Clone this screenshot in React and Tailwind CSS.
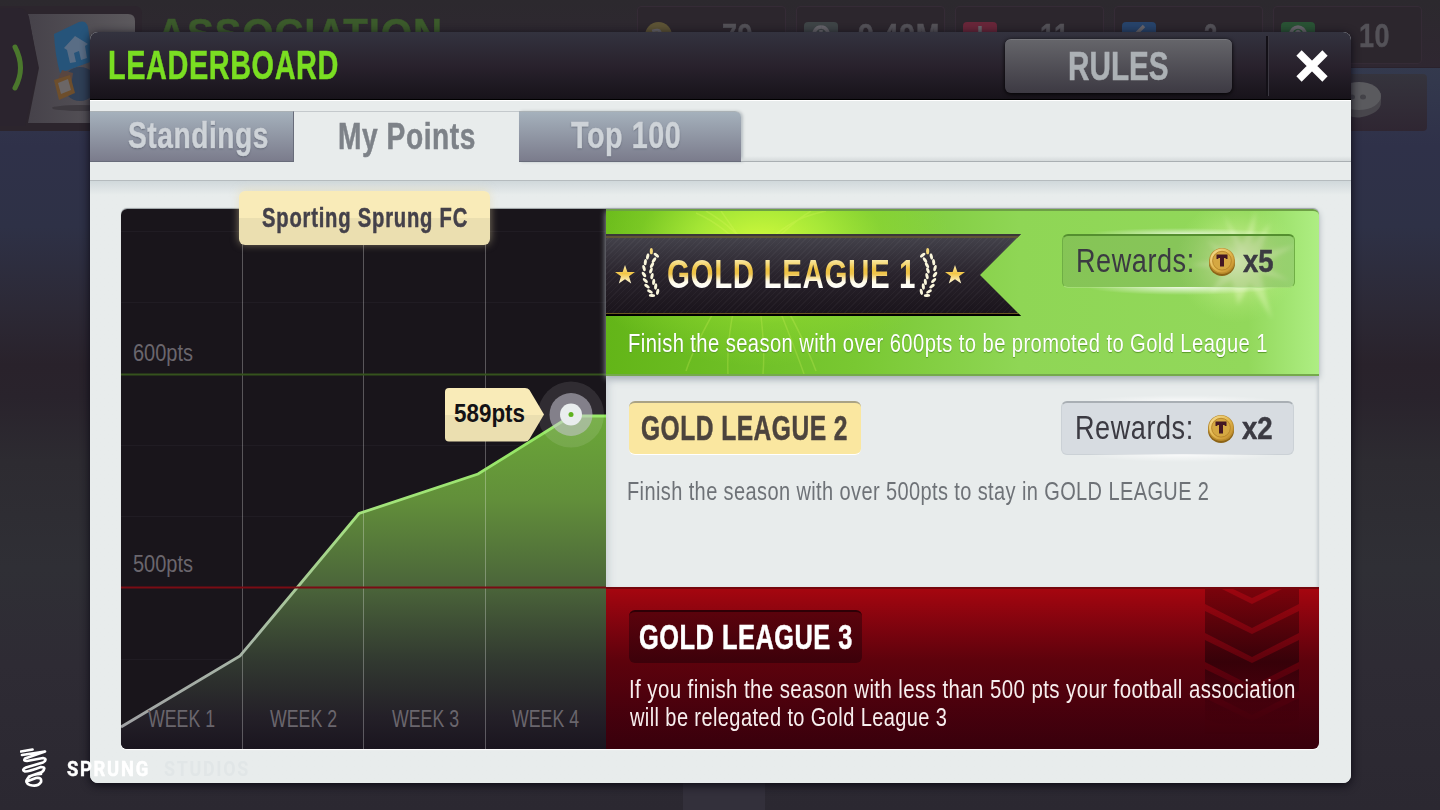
import { useLayoutEffect, useRef, useState } from "react";

const FONT = "font-['Liberation_Sans_Narrow','Liberation_Sans',sans-serif]";

// Condensed text: squeezes a single line to the width of its box
function FitText({ children, bold, className = "", textClass = "tracking-[0.02em]" }) {
  const box = useRef(null);
  const text = useRef(null);
  const [scale, setScale] = useState(1);

  useLayoutEffect(() => {
    setScale(box.current.clientWidth / text.current.offsetWidth);
  }, [children]);

  return (
    <div
      ref={box}
      className={`shrink-0 whitespace-nowrap leading-none ${bold ? "font-bold [-webkit-text-stroke:0.5px]" : ""} ${className}`}
    >
      <span
        ref={text}
        className={`inline-block origin-left align-top ${textClass}`}
        style={{ transform: `scaleX(${scale})` }}
      >
        {children}
      </span>
    </div>
  );
}

function Star({ className = "" }) {
  return (
    <svg viewBox="0 0 20 19" className={`h-[19px] w-5 shrink-0 ${className}`}>
      <defs>
        <linearGradient id="star" x1="0" y1="0" x2="0" y2="1">
          <stop offset="0" stopColor="#fff3b8" />
          <stop offset="0.45" stopColor="#f2c544" />
          <stop offset="1" stopColor="#fffbe0" />
        </linearGradient>
      </defs>
      <path d="M10 0l2.400 7H20l-6 4.300 2.200 7.200L10 14.200 3.800 18.500 6 11.300 0 7h7.600z" fill="url(#star)" />
    </svg>
  );
}

const leaves = [
  [31, 12, 0], [20, 28, 12], [46, 24, -50], [13, 45, 5], [39, 39, 35],
  [9, 63, -15], [33, 54, 30], [9, 82, -35], [30, 70, 20], [13, 100, -45],
  [33, 87, 12], [18, 117, -52], [38, 104, 5], [27, 133, -62], [44, 118, 5],
  [50, 134, 10], [33, 145, -85],
];

function Laurel({ className = "" }) {
  return (
    <svg viewBox="0 0 60 152" className={`h-[51px] w-5 shrink-0 ${className}`}>
      {leaves.map(([x, y, r]) => (
        <ellipse
          key={`${x}-${y}`}
          cx={x}
          cy={y}
          rx="4.600"
          ry="9.500"
          fill={y < 20 ? "#f3d778" : "#faf6dc"}
          transform={`rotate(${r} ${x} ${y})`}
        />
      ))}
    </svg>
  );
}

function Coin() {
  return (
    <svg viewBox="0 0 28 30" className="h-[30px] w-7 shrink-0">
      <defs>
        <linearGradient id="coin" x1="0" y1="0" x2="1" y2="1">
          <stop offset="0" stopColor="#f8e19a" />
          <stop offset="0.500" stopColor="#e3b84f" />
          <stop offset="1" stopColor="#bf8826" />
        </linearGradient>
      </defs>
      <ellipse cx="14" cy="16.500" rx="13" ry="12.500" fill="#8d6416" />
      <circle cx="14" cy="14" r="13" fill="#b98a2c" />
      <circle cx="14" cy="13.500" r="12" fill="url(#coin)" />
      <circle cx="14" cy="13.700" r="9.400" fill="#d5a842" stroke="#b58328" strokeWidth="0.900" />
      <path d="M8.500 7.500h11v4.500h-1.600l-.5-1H16v8.500h-4V11h-1.400l-.5 1H8.500z" fill="#431723" />
    </svg>
  );
}

function Rewards({ amount, className = "" }) {
  return (
    <div className={`relative flex h-[54px] w-[233px] items-center rounded-md pl-[13px] text-[#3b3a42] ${className}`}>
      <div className="absolute -top-2 left-6 h-1.5 w-48 bg-[radial-gradient(ellipse_50%_100%_at_50%_100%,#ffffffaa,transparent)]" />
      <div className="absolute -bottom-2 left-6 h-2 w-48 bg-[radial-gradient(ellipse_50%_100%_at_50%_0%,#ffffffcc,transparent)]" />
      <FitText className="-mt-0.5 w-[119px] text-[33px]">Rewards:</FitText>
      <div className="ml-[13px]">
        <Coin />
      </div>
      <FitText bold className="-mt-0.5 ml-[7px] w-[31px] text-[32px]" textClass="tracking-normal">{amount}</FitText>
    </div>
  );
}

const stats = [
  { value: "79", icon: "size-[27px] rounded-full bg-[#5d5335]", box: "pr-[32px]", width: "w-[31px]" },
  { value: "9.49M", icon: "h-[27px] w-[34px] rounded-sm bg-[#3e4446]", box: "pr-[4px]", width: "w-[82px]" },
  { value: "11", icon: "h-[27px] w-[34px] rounded-sm bg-[#682639]", box: "pr-[34px]", width: "w-[29px]" },
  { value: "2", icon: "h-[27px] w-[34px] rounded-sm bg-[#27436a]", box: "pr-[44px]", width: "w-[14px]" },
  { value: "10", icon: "h-[27px] w-[34px] rounded-sm bg-[#295234]", box: "pr-[31px]", width: "w-[31px]" },
];

const statMarks = [
  "M9 8q9-3 10 1l-6 4",
  "M17 5a7 7 0 1 0 .1 0M17 8v9",
  "M17 4v18M9 13h16",
  "M22 4l-9 9h7l-7 9",
  "M10 12a7 7 0 0 1 14 0M15 12q2-5 4 0",
];

function Backdrop() {
  return (
    <div className="absolute inset-0">
      <div className="h-full bg-[linear-gradient(to_bottom,#343a4e_8%,#2f3149_18%,#2e3146_28%,#2c2936_38%,#29222b_45%,#29232c_49%,#2d2b31_57%,#2f2f35_70%,#2e2b34_82%,#2b2831_100%)]">
        <div className="flex h-[68px] items-start border-b border-[#2a222c] bg-linear-to-b from-[#2c292e] to-[#2f2731] pl-[157px]">
          <FitText bold className="mt-[13px] w-[286px] text-[42px] text-[#3b5a2b]">ASSOCIATION</FitText>
          <div className="ml-[194px] mt-1.5 flex gap-[10px]">
            {stats.map((stat, i) => (
              <div key={stat.value} className={`flex h-[58px] w-[149px] justify-between rounded border border-[#352b36] bg-[#2c262d] pl-[7px] ${stat.box}`}>
                <svg viewBox="0 0 34 27" className={`mt-[15px] shrink-0 ${stat.icon}`}>
                  <path d={statMarks[i]} stroke="#66646a" strokeWidth="3.500" fill="none" />
                </svg>
                <FitText bold className={`mt-[11px] text-[34px] text-[#545258] ${stat.width}`}>{stat.value}</FitText>
              </div>
            ))}
          </div>
        </div>
      </div>

      <svg viewBox="0 0 150 135" className="absolute left-0 top-0 h-[135px] w-[150px]">
        <defs>
          <linearGradient id="crest" x1="0" x2="1">
            <stop offset="0" stopColor="#46424a" />
            <stop offset="1" stopColor="#5c595d" />
          </linearGradient>
        </defs>
        <path d="M0 6h134q8 0 8 8v117H0z" fill="#2c252d" />
        <path d="M28 14h100q7 0 7 7v102H28L39 68z" fill="url(#crest)" />
        <path d="M0 8h18q8 0 11 9l9 51-13 58H0z" fill="#2b242e" />
        <path d="M15 47q11 21 0 41" stroke="#4b782d" strokeWidth="5" fill="none" strokeLinecap="round" />
        <ellipse cx="80" cy="108" rx="28" ry="3" fill="#3e3a40" />
        <circle cx="80" cy="84" r="17" fill="#2f3f56" />
        <path d="M54 34l25-12q7-2 9 5l5 34-33 12q-5-18-6-39z" fill="#26547a" />
        <path d="M64 48l11-12 13 8-3 2 2 12-6 2-2-9-5 2 2 9-6 1-3-13z" fill="#596d85" />
        <path d="M62 70l11 3-2 13-14-4z" fill="#594640" />
        <path d="M54 80l16-5 5 18-16 7z" fill="#6d4e2c" />
        <path d="M58 83l10-4 3 11-10 4z" fill="#6b6666" />
      </svg>

      <div className="absolute left-[1340px] top-[74px] h-[57px] w-[87px] rounded bg-linear-to-b from-[#35343d] to-[#2f2632]">
        <svg viewBox="0 0 41 38" className="mt-2 h-[38px] w-[41px]">
          <path d="M0 16v8q8 14 22 11 19-4 19-15v-9z" fill="#48464c" />
          <ellipse cx="19" cy="14" rx="22" ry="14" fill="#5a5a5e" />
          <ellipse cx="23" cy="15" rx="3" ry="2.500" fill="#434248" />
          <ellipse cx="12" cy="15" rx="3" ry="2.500" fill="#434248" />
        </svg>
      </div>

      <div className="absolute bottom-0 left-[683px] h-[27px] w-[82px] bg-[#33303b]" />
    </div>
  );
}

function Header() {
  return (
    <div className="flex h-[68px] shrink-0 items-center rounded-t-lg border-b border-black bg-linear-to-b from-[#33333f] via-[#29222d] to-[#17131a] pl-[18px]">
      <FitText bold className="w-[231px] text-[41px] text-[#7ade22]">LEADERBOARD</FitText>
      <button className="ml-auto flex h-[54px] w-[227px] items-center justify-center rounded-md border-t border-[#77777c] bg-linear-to-b from-[#65656a] to-[#3d3a43] text-[#acb1b5] shadow-[0_1px_4px_#000]">
        <FitText bold className="w-[101px] text-[40px]" textClass="tracking-normal">RULES</FitText>
      </button>
      <div className="ml-[34px] h-[60px] w-[3px] border-l-2 border-r border-l-[#131017] border-r-[#3b3841]" />
      <button className="flex h-full w-[82px] items-center pl-[27px]">
        <svg viewBox="0 0 32 32" className="size-8">
          <path d="M3 3l26 26M29 3L3 29" stroke="#fff" strokeWidth="7.500" />
        </svg>
      </button>
    </div>
  );
}

function Tabs() {
  return (
    <div className="h-[81px] shrink-0 border-b border-[#b5bbbe] border-t border-t-white">
      <div className="flex h-[61px] items-end">
        <button className="flex h-[51px] w-[204px] items-center border-r border-[#686c7a] border-b border-t border-t-[#aab1b5] bg-linear-to-b from-[#a5b1bc] to-[#7b7c8c] pl-[38px]">
          <FitText bold className="w-[141px] text-[36.500px] text-[#ced3d8]" textClass="tracking-[0.02em] [text-shadow:0_1px_2px_#5d6270]">Standings</FitText>
        </button>
        <button className="flex h-[51px] w-[225px] items-center justify-center border-t border-[#c4c9cc]">
          <FitText bold className="w-[138px] text-[36.500px] text-[#7d8288]">My Points</FitText>
        </button>
        <button className="flex h-[51px] w-[222px] items-center rounded-tr-md border-b border-t border-b-[#686c7a] border-t-[#aab1b5] bg-linear-to-b from-[#a5b1bc] to-[#7b7c8c] pl-[52px] shadow-[2px_0_3px_#b9c0c4]">
          <FitText bold className="w-[110px] text-[36.500px] text-[#ced3d8]" textClass="tracking-[0.02em] [text-shadow:0_1px_2px_#5d6270]">Top 100</FitText>
        </button>
        <div className="h-1.5 flex-1 border-b border-[#a9afb2] bg-linear-to-b from-transparent to-[#d5dadb]" />
      </div>
    </div>
  );
}

const weeks = [
  { label: "WEEK 1", x: 27, w: 67 },
  { label: "WEEK 2", x: 149, w: 67 },
  { label: "WEEK 3", x: 271, w: 67 },
  { label: "WEEK 4", x: 391, w: 67 },
];

function Chart() {
  return (
    <svg viewBox="0 0 485 540" className={`h-[540px] w-[485px] shrink-0 rounded-l-md bg-[#19151b] ${FONT}`}>
      <defs>
        <linearGradient id="area" gradientUnits="userSpaceOnUse" x1="0" y1="207" x2="0" y2="540">
          <stop offset="0" stopColor="#6ba838" />
          <stop offset="0.250" stopColor="#628f3a" />
          <stop offset="0.510" stopColor="#4b653a" />
          <stop offset="0.740" stopColor="#313830" />
          <stop offset="0.900" stopColor="#242028" />
          <stop offset="1" stopColor="#1a151f" />
        </linearGradient>
        <linearGradient id="line" gradientUnits="userSpaceOnUse" x1="0" y1="207" x2="0" y2="518">
          <stop offset="0" stopColor="#8fe85a" />
          <stop offset="0.300" stopColor="#a3e37c" />
          <stop offset="0.700" stopColor="#a9bba6" />
          <stop offset="1" stopColor="#a0a1a4" />
        </linearGradient>
        <linearGradient id="tag" x1="0" y1="0" x2="0" y2="1">
          <stop offset="0.500" stopColor="#f9ebb8" />
          <stop offset="0.500" stopColor="#ebdfb0" />
        </linearGradient>
      </defs>

      {[22, 93, 236, 307, 450, 521].map((y) => (
        <path key={y} d={`M0 ${y}.500h485`} stroke="#201c23" />
      ))}
      <path d="M0 518L119 447 238 304.500 357 265 450 207H485V540H0z" fill="url(#area)" />
      <path d="M121.500 0v540M242.500 0v540M364.500 0v540" stroke="#fff" strokeOpacity="0.280" />
      <path d="M0 518L119 447 238 304.500 357 265 450 207H485" stroke="url(#line)" strokeWidth="2.800" fill="none" />
      <path d="M0 165.500h485" stroke="#35521d" strokeWidth="2" />
      <path d="M0 378.500h485" stroke="#7a0c14" strokeWidth="2" />

      <g fill="#6a666d" fontSize="24">
        <text x="12" y="152" textLength="60" lengthAdjust="spacingAndGlyphs">600pts</text>
        <text x="12" y="363" textLength="60" lengthAdjust="spacingAndGlyphs">500pts</text>
        {weeks.map((week) => (
          <text key={week.label} x={week.x} y="518" textLength={week.w} lengthAdjust="spacingAndGlyphs">
            {week.label}
          </text>
        ))}
      </g>

      <circle cx="450" cy="205.500" r="33" fill="#fff" fillOpacity="0.100" />
      <circle cx="450" cy="205.500" r="21.500" fill="#c9c6d4" fillOpacity="0.550" />
      <circle cx="450" cy="205.500" r="11" fill="#e9edee" />
      <circle cx="450" cy="205.500" r="2.500" fill="#5fb21f" />

      <path d="M328 179h76q3 0 4.500 2L423 205.500 408.500 230q-1.500 2.500-4.500 2.500h-76q-4 0-4-4v-45.500q0-4 4-4z" fill="url(#tag)" />
      <text x="333" y="213" fontSize="26" fontWeight="bold" fill="#141215" textLength="71" lengthAdjust="spacingAndGlyphs">589pts</text>
    </svg>
  );
}

function PromotionPanel() {
  return (
    <section className="relative h-[167px] rounded-tr-md border-b-2 border-t-2 border-b-[#75a94c] border-t-[#6d9f45] bg-[radial-gradient(ellipse_190px_120px_at_155px_35px,#d2fb3c_0%,#b4f13acc_35%,#98e03066_65%,transparent_100%),linear-gradient(to_right,#63b518_0%,#79c832_35%,#8fd655_58%,#92d85b_90%,#aeee83_100%)] shadow-[0_2px_6px_#a8b0b6]">
      <svg viewBox="0 0 713 163" className="absolute inset-0 h-full w-full">
        <defs>
          <radialGradient id="flare">
            <stop offset="0" stopColor="#f4ffd0" stopOpacity="0.900" />
            <stop offset="0.400" stopColor="#e2f9a9" stopOpacity="0.450" />
            <stop offset="1" stopColor="#b5ee7c" stopOpacity="0" />
          </radialGradient>
          <filter id="soft">
            <feGaussianBlur stdDeviation="2.200" />
          </filter>
        </defs>
        <path
          d="M150 50Q120 15 90 2M150 50Q135 20 100 0M150 50Q170 10 220 0M150 50Q180 15 205 0M150 50L115 0M135 70Q120 120 122 163M150 70Q160 130 157 163M165 70Q195 120 210 160M170 90Q190 140 198 163M120 80Q90 130 80 160"
          stroke="#e4fa66"
          strokeOpacity="0.220"
          strokeWidth="1.500"
          fill="none"
        />
        <circle cx="630" cy="50" r="62" fill="url(#flare)" />
        <path
          d="M636 52L618 4l18 30L650 0l-4 34 18-22-10 30 36-8-34 20 28 16-30-8 12 46-22-36-12 22-6-26-22 14 16-24-36-4 34-6-18-20z"
          fill="#f4fdcf"
          fillOpacity="0.350"
          filter="url(#soft)"
        />
      </svg>

      <div className="relative flex items-start justify-between pr-[24px] pt-[23px]">
        <div className="h-[82px] w-[415px] bg-[repeating-linear-gradient(135deg,#ffffff08_0_1px,transparent_1px_4px),linear-gradient(to_bottom,#45444d,#29232c_50%,#19131a)] [clip-path:polygon(0_0,100%_0,calc(100%-41px)_50%,100%_100%,0_100%)]">
          <div className="flex h-full items-center border-y-2 border-t-[#3b3738] border-b-black pl-[9px] shadow-[inset_0_2px_0_#5f5535,inset_0_-1px_0_#6b5921]">
            <Star className="-mt-px" />
            <Laurel className="-mt-1.5 ml-1.5" />
            <FitText
              className="-mt-0.5 ml-[6px] w-[249px] text-[40px] font-bold"
              textClass="tracking-[0.02em] bg-[linear-gradient(to_bottom,#f9e9a4_15%,#efc23f_38%,#eec44d_50%,#fffbe6_68%,#fff_85%)] bg-clip-text text-transparent"
            >
              GOLD LEAGUE 1
            </FitText>
            <Laurel className="-mt-1.5 ml-0.5 -scale-x-100" />
            <Star className="-mt-px ml-[7px]" />
          </div>
        </div>
        <Rewards amount="x5" className="border border-t-2 border-[#6fae45] border-b-[#a4dd75] border-t-[#548f2f] bg-[#5f7f5a]/20" />
      </div>
      <FitText className="relative ml-[22px] mt-[15px] w-[640px] text-[25px] text-white" textClass="tracking-[0.02em] [text-shadow:0_1px_1px_#5a9a2a]">
        Finish the season with over 600pts to be promoted to Gold League 1
      </FitText>
    </section>
  );
}

function StayPanel() {
  return (
    <section className="h-[211px] bg-[#e8ecec] shadow-[inset_6px_8px_8px_-4px_#c5ccd2,inset_-3px_0_3px_-1px_#c9d0d3]">
      <div className="flex justify-between pl-[23px] pr-[25px] pt-[25px]">
        <div className="flex h-[54px] w-[232px] items-center rounded-md border-b border-t-2 border-b-white border-t-[#aaa384] bg-[#fae7a0] pl-[12px]">
          <FitText bold className="-mt-0.5 w-[207px] text-[35px] text-[#4c443d]">GOLD LEAGUE 2</FitText>
        </div>
        <Rewards amount="x2" className="border border-t-2 border-[#cbd1d6] border-t-[#a9afb4] bg-[#d7dce1]" />
      </div>
      <FitText className="ml-[21px] mt-[24px] w-[582px] text-[25px] text-[#6e7277]">
        Finish the season with over 500pts to stay in GOLD LEAGUE 2
      </FitText>
    </section>
  );
}

function RelegationPanel() {
  return (
    <section className="relative h-[162px] rounded-br-md border-t-2 border-[#75060c] bg-linear-to-b from-[#a5060f] via-[#5d020c] via-45% to-[#38000c] pl-[23px] pt-[21px]">
      <svg viewBox="0 0 94 146" className="absolute right-5 top-0 h-[146px] w-[94px]">
        <defs>
          <linearGradient id="chevron" x1="0" y1="0" x2="0" y2="146" gradientUnits="userSpaceOnUse">
            <stop offset="0" stopColor="#7a030b" />
            <stop offset="0.500" stopColor="#2c0108" stopOpacity="0.800" />
            <stop offset="0.950" stopColor="#30000a" stopOpacity="0" />
          </linearGradient>
        </defs>
        <path d="M0 0h94v146H0z" fill="#7a0610" fillOpacity="0.180" className="[mask-image:linear-gradient(to_bottom,#000,transparent)]" />
        <path
          d="M28 0H66L47 9zM0 0H17L47 15 77 0H94V15L47 39 0 15zM0 22L47 45 94 22V44L47 68 0 44zM0 51L47 74 94 51V73L47 97 0 73zM0 80L47 103 94 80V102L47 126 0 102zM0 109L47 132 94 109V130L47 146 0 130z"
          fill="url(#chevron)"
        />
      </svg>
      <div className="flex h-[53px] w-[233px] items-center rounded-md border-t-2 border-[#2e0006] bg-linear-to-b from-[#5b030c] to-[#3c010a] pl-[10px]">
        <FitText bold className="-mt-[3px] w-[214px] text-[35px] text-white">GOLD LEAGUE 3</FitText>
      </div>
      <div className="relative mt-3.5 flex flex-col gap-[3px] text-[25px] text-[#f7eeee]">
        <FitText className="w-[667px]">If you finish the season with less than 500 pts your football association</FitText>
        <FitText className="ml-px w-[317px]">will be relegated to Gold League 3</FitText>
      </div>
    </section>
  );
}

function Watermark() {
  return (
    <div className="absolute left-5 top-[746px] flex items-center font-[Roboto,sans-serif] text-[21px] font-bold">
      <svg viewBox="0 0 28 42" className="h-[42px] w-7">
        <path
          d="M1 5.500L12.500 3.500M2 9L25 5.500 5 12.500Q3 15 7 15L23 12Q28 13 23 16.500L6 21.500Q1 24 5 25.500 9 25.500 21 21 27 21 22 26L9 30.500M21 28Q12 28 8 32 4 37 10 39 18 41 21 36 22 31 16 32L8 35"
          stroke="#fff"
          strokeWidth="2.700"
          fill="none"
          strokeLinecap="round"
          strokeLinejoin="round"
        />
      </svg>
      <FitText bold className="ml-[19px] mt-1 w-[83px] text-white" textClass="tracking-[2px]">SPRUNG</FitText>
      <FitText className="ml-[14px] mt-1 w-[86px] text-[#e1e6e7]" textClass="tracking-[2px]">STUDIOS</FitText>
    </div>
  );
}

export default function App() {
  return (
    <div className={`relative h-[810px] w-[1440px] overflow-hidden pl-[90px] pt-8 ${FONT}`}>
      <Backdrop />
      <main className="relative flex h-[751px] w-[1261px] flex-col rounded-lg bg-[#e8ecec] shadow-[0_2px_10px_#0c0a14]">
        <Header />
        <Tabs />
        <div className="flex flex-1 flex-col rounded-b-lg bg-linear-to-b from-[#d0d8db] to-[#e8ecec] to-[14px] pl-[31px] pt-7">
          <div className="relative flex h-[540px] w-[1198px] rounded-md shadow-[0_1px_1px_#fff,0_-1px_1px_#99a0a4]">
            <Chart />
            <div className="flex w-[713px] flex-col">
              <PromotionPanel />
              <StayPanel />
              <RelegationPanel />
            </div>
            <div className="absolute -top-[18px] left-[118px] flex h-[54px] w-[251px] items-center justify-center rounded-md bg-[linear-gradient(to_bottom,#f9ebb8_50%,#ebdfb0_50%)] shadow-[0_-1px_8px_#e9dca888]">
              <FitText bold className="w-[206px] text-[28px] text-[#44414a]" textClass="tracking-[0.04em]">Sporting Sprung FC</FitText>
            </div>
          </div>
        </div>
      </main>
      <Watermark />
    </div>
  );
}
